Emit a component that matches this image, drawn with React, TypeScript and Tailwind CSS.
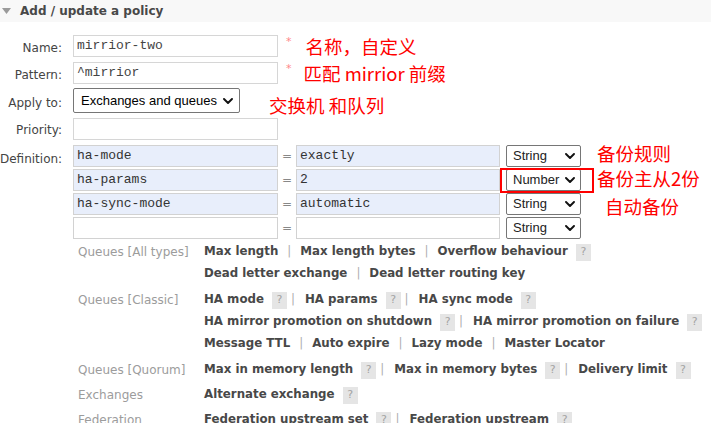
import React from "react";

type Item = { t: string; q?: boolean };

const Chevron = () => (
  <svg width="10" height="6" viewBox="0 0 10 6" className="shrink-0">
    <path d="M1 1l4 4 4-4" fill="none" stroke="#111" strokeWidth="1.9" strokeLinecap="round" strokeLinejoin="round" />
  </svg>
);

const Q = () => (
  <span className="ml-[8px] inline-flex h-[17px] w-[15px] shrink-0 items-center justify-center bg-[#e5e5e5] text-[11px] font-normal text-[#a3a3a3]">
    ?
  </span>
);

const Sep = ({ afterQ }: { afterQ?: boolean }) => (
  <span className={afterQ ? "ml-[4px] mr-[10px] font-normal text-[#b0b0b0]" : "mx-[9px] font-normal text-[#b0b0b0]"}>|</span>
);

const Line = ({ items }: { items: Item[] }) => (
  <div className="flex h-[22px] items-center whitespace-nowrap text-[11.8px] font-bold text-[#484848]">
    {items.map((it, i) => (
      <React.Fragment key={i}>
        {i > 0 && <Sep afterQ={items[i - 1].q} />}
        <span>{it.t}</span>
        {it.q && <Q />}
      </React.Fragment>
    ))}
  </div>
);

const Group = ({ label, lines, mt }: { label: string; lines: Item[][]; mt: string }) => (
  <div className={"flex " + mt}>
    <div className="w-[126px] shrink-0 text-[12px] leading-[22px] text-[#9c9c9c] whitespace-nowrap">{label}</div>
    <div className="flex flex-col">
      {lines.map((l, i) => (
        <Line key={i} items={l} />
      ))}
    </div>
  </div>
);

const mono = "font-['Liberation_Mono',monospace] text-[13px]";

const Note = ({ children, cls }: { children: React.ReactNode; cls: string }) => (
  <div className={"shrink-0 whitespace-nowrap font-['Noto_Sans_CJK_SC',sans-serif] text-[18.5px] leading-[22px] text-[#ff0000] " + cls}>
    {children}
  </div>
);

const TypeSelect = ({ text }: { text: string }) => (
  <div className="flex h-[22px] w-[75px] shrink-0 items-center justify-between rounded-[2px] border border-[#767676] bg-white pl-[6px] pr-[5px] font-['Liberation_Sans',sans-serif] text-[13px] text-[#222]">
    <span>{text}</span>
    <Chevron />
  </div>
);

const DefRow = ({ k, v, blue, type, note, boxed }: { k: string; v: string; blue: boolean; type: string; note?: React.ReactNode; boxed?: boolean }) => (
  <div className="flex h-[22px] items-start">
    <div className={(blue ? "bg-[#e8eefb] " : "bg-white ") + "flex h-[22px] w-[205px] shrink-0 items-center border border-[#d2d2d2] px-[3px] text-[#333] " + mono}>{k}</div>
    <div className="w-[18px] shrink-0 text-center text-[12px] leading-[22px] text-[#888]">=</div>
    <div className={(blue ? "bg-[#e8eefb] " : "bg-white ") + "flex h-[22px] w-[204px] shrink-0 items-center border border-[#d2d2d2] px-[3px] text-[#333] " + mono}>{v}</div>
    <div className="relative ml-[6px]">
      <TypeSelect text={type} />
      {boxed && <div className="absolute -bottom-[2px] -left-[6px] -right-[13px] -top-[1px] border-2 border-[#ff0000]" />}
    </div>
    {note}
  </div>
);

const Label = ({ children, pt }: { children: React.ReactNode; pt: string }) => (
  <div className={"w-[62px] shrink-0 text-right text-[12px] leading-[16px] text-[#444] " + pt}>{children}</div>
);

export default function App() {
  return (
    <div className="relative h-[423px] w-[711px] overflow-hidden bg-white font-['DejaVu_Sans',sans-serif]">
      {/* header */}
      <div className="flex h-[22px] items-center bg-[#f8f8f8] pl-[2px]">
        <svg width="9" height="6" viewBox="0 0 9 6" className="shrink-0">
          <path d="M0 0h9L4.5 6z" fill="#9a9a9a" />
        </svg>
        <span className="ml-[9px] text-[12px] font-bold text-[#484848]">Add / update a policy</span>
      </div>

      {/* form */}
      <div className="mt-[13px] flex flex-col">
        {/* Name */}
        <div className="flex h-[22px] items-start">
          <Label pt="pt-[5px]">Name:</Label>
          <div className="ml-[11px] flex h-[22px] items-center">
            <div className={"flex h-[22px] w-[205px] items-center border border-[#d6d6d6] px-[3px] text-[#444] " + mono}>mirrior-two</div>
            <span className="ml-[8px] self-start text-[11px] leading-[14px] text-[#f88]">*</span>
            <Note cls="ml-[14px]">名称，自定义</Note>
          </div>
        </div>
        {/* Pattern */}
        <div className="mt-[5px] flex h-[22px] items-start">
          <Label pt="pt-[5px]">Pattern:</Label>
          <div className="ml-[11px] flex h-[22px] items-center">
            <div className={"flex h-[22px] w-[205px] items-center border border-[#d6d6d6] px-[3px] text-[#444] " + mono}>^mirrior</div>
            <span className="ml-[8px] self-start text-[11px] leading-[14px] text-[#f88]">*</span>
            <Note cls="ml-[12px]">匹配 mirrior 前缀</Note>
          </div>
        </div>
        {/* Apply to */}
        <div className="mt-[4px] flex h-[25px] items-start">
          <Label pt="pt-[7px]">Apply to:</Label>
          <div className="ml-[11px] flex items-start">
            <div className="flex h-[25px] w-[167px] items-center justify-between rounded-[2px] border border-[#767676] bg-white pl-[7px] pr-[6px] font-['Liberation_Sans',sans-serif] text-[13px] text-black">
              <span>Exchanges and queues</span>
              <Chevron />
            </div>
            <Note cls="ml-[29px] mt-[6px]">交换机 和队列</Note>
          </div>
        </div>
        {/* Priority */}
        <div className="mt-[5px] flex h-[22px] items-start">
          <Label pt="pt-[4px]">Priority:</Label>
          <div className="ml-[11px] h-[22px] w-[205px] border border-[#d6d6d6]" />
        </div>
        {/* Definition */}
        <div className="mt-[5px] flex items-start">
          <Label pt="pt-[6px]">Definition:</Label>
          <div className="ml-[11px] flex flex-col gap-[2px]">
            <DefRow k="ha-mode" v="exactly" blue type="String" note={<Note cls="ml-[16px] -mt-[3px]">备份规则</Note>} />
            <DefRow k="ha-params" v="2" blue type="Number" boxed note={<Note cls="ml-[16px] -mt-[2px]">备份主从2份</Note>} />
            <DefRow k="ha-sync-mode" v="automatic" blue type="String" note={<Note cls="ml-[24px] mt-[2px]">自动备份</Note>} />
            <DefRow k="" v="" blue={false} type="String" />
          </div>
        </div>
      </div>

      {/* help */}
      <div className="mt-[2px] flex flex-col pl-[78px]">
        <Group
          label="Queues [All types]"
          mt="mt-0"
          lines={[
            [{ t: "Max length" }, { t: "Max length bytes" }, { t: "Overflow behaviour", q: true }],
            [{ t: "Dead letter exchange" }, { t: "Dead letter routing key" }],
          ]}
        />
        <Group
          label="Queues [Classic]"
          mt="mt-[4px]"
          lines={[
            [{ t: "HA mode", q: true }, { t: "HA params", q: true }, { t: "HA sync mode", q: true }],
            [{ t: "HA mirror promotion on shutdown", q: true }, { t: "HA mirror promotion on failure", q: true }],
            [{ t: "Message TTL" }, { t: "Auto expire" }, { t: "Lazy mode" }, { t: "Master Locator" }],
          ]}
        />
        <Group
          label="Queues [Quorum]"
          mt="mt-[4px]"
          lines={[[{ t: "Max in memory length", q: true }, { t: "Max in memory bytes", q: true }, { t: "Delivery limit", q: true }]]}
        />
        <Group label="Exchanges" mt="mt-[3px]" lines={[[{ t: "Alternate exchange", q: true }]]} />
        <Group
          label="Federation"
          mt="mt-[3px]"
          lines={[[{ t: "Federation upstream set", q: true }, { t: "Federation upstream", q: true }]]}
        />
      </div>
    </div>
  );
}
